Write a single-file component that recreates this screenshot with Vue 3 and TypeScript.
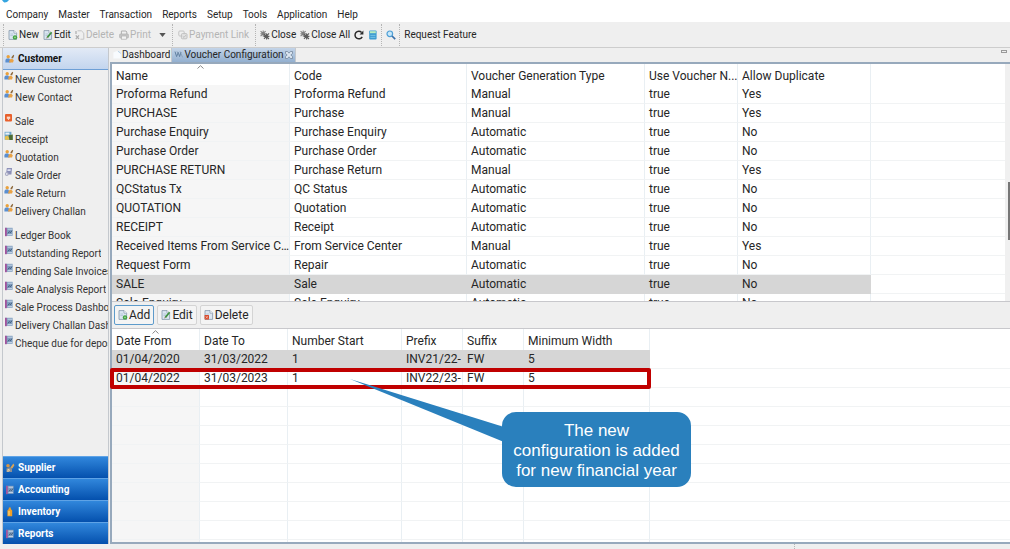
<script setup lang="ts">
import { ref } from 'vue'

interface Voucher {
  name: string
  code: string
  type: string
  numbered: string
  duplicate: string
}

interface NavItem {
  label: string
  icon: string
}

const menus: string[] = ['Company', 'Master', 'Transaction', 'Reports', 'Setup', 'Tools', 'Application', 'Help']

const make = (name: string, code: string, type: string, duplicate: string): Voucher => ({
  name, code, type, numbered: 'true', duplicate,
})

const vouchers: Voucher[] = [
  make('Proforma Refund', 'Proforma Refund', 'Manual', 'Yes'),
  make('PURCHASE', 'Purchase', 'Manual', 'Yes'),
  make('Purchase Enquiry', 'Purchase Enquiry', 'Automatic', 'No'),
  make('Purchase Order', 'Purchase Order', 'Automatic', 'No'),
  make('PURCHASE RETURN', 'Purchase Return', 'Manual', 'Yes'),
  make('QCStatus Tx', 'QC Status', 'Automatic', 'No'),
  make('QUOTATION', 'Quotation', 'Automatic', 'No'),
  make('RECEIPT', 'Receipt', 'Automatic', 'No'),
  make('Received Items From Service C…', 'From Service Center', 'Manual', 'Yes'),
  make('Request Form', 'Repair', 'Automatic', 'No'),
  make('SALE', 'Sale', 'Automatic', 'No'),
  make('Sale Enquiry', 'Sale Enquiry', 'Automatic', 'No'),
]
const selectedVoucher = ref('SALE')

const periods: string[][] = [
  ['01/04/2020', '31/03/2022', '1', 'INV21/22-', 'FW', '5'],
  ['01/04/2022', '31/03/2023', '1', 'INV22/23-', 'FW', '5'],
]
const selectedPeriod = ref(0)

const navGroups: NavItem[][] = [
  [
    { label: 'New Customer', icon: 'people' },
    { label: 'New Contact', icon: 'people' },
  ],
  [
    { label: 'Sale', icon: 'sale' },
    { label: 'Receipt', icon: 'receipt' },
    { label: 'Quotation', icon: 'people' },
    { label: 'Sale Order', icon: 'order' },
    { label: 'Sale Return', icon: 'people' },
    { label: 'Delivery Challan', icon: 'people' },
  ],
  [
    { label: 'Ledger Book', icon: 'book' },
    { label: 'Outstanding Report', icon: 'book' },
    { label: 'Pending Sale Invoices', icon: 'book' },
    { label: 'Sale Analysis Report', icon: 'book' },
    { label: 'Sale Process Dashboard', icon: 'book' },
    { label: 'Delivery Challan Dashboard', icon: 'book' },
    { label: 'Cheque due for deposit', icon: 'book' },
  ],
]

const sections: NavItem[] = [
  { label: 'Supplier', icon: 'supplier' },
  { label: 'Accounting', icon: 'book' },
  { label: 'Inventory', icon: 'bottle' },
  { label: 'Reports', icon: 'book' },
]
</script>

<template>
  <div class="app">
    <svg class="sprite" aria-hidden="true">
      <symbol id="people" viewBox="0 0 10 10">
        <circle cx="3.2" cy="2.8" r="1.7" fill="#eaa13c" />
        <path d="M.4 8.6V6.4Q.6 4.8 2 4.6H4.2L5.6 6.6V8.6Z" fill="#5b8fd0" />
        <path d="M4 8.6 4.8 5.6 7 4.6 8.8 6.2 8 8.6Z" fill="#e9a246" />
        <path d="M6.2 3.6 8.4.8 9.2 1.6 8 4.4Z" fill="#8f6a3c" />
      </symbol>
      <symbol id="sale" viewBox="0 0 10 10">
        <rect x="1" y="1" width="7" height="7.4" rx="1" fill="#e8602c" />
        <path d="M2.8 3.6H6.2V5.8H2.8Z" fill="#fbd9c8" />
        <path d="M3.4 5.8H5.6L4.5 7Z" fill="#fff" />
      </symbol>
      <symbol id="receipt" viewBox="0 0 10 10">
        <rect x=".6" y=".8" width="6.8" height="8" fill="#6fa5c9" />
        <rect x="1.4" y="1.6" width="4" height="2" fill="#e9f2f8" />
        <path d="M1 8.8V5.6L4 4.4 6 8.8Z" fill="#e5c04a" />
        <path d="M4.6 4.2 8.8 3.6V9H5.4Z" fill="#4c6b35" />
      </symbol>
      <symbol id="order" viewBox="0 0 10 10">
        <path d="M2.8 1H8L7.4 7.6H2Z" fill="#8c90b8" />
        <path d="M3.6 2.2H6.8L6.5 4H3.4Z" fill="#dfe2f2" />
        <circle cx="2.8" cy="7" r="1.9" fill="#a9abc4" />
        <circle cx="2.8" cy="7" r=".8" fill="#fff" />
      </symbol>
      <symbol id="book" viewBox="0 0 10 10">
        <rect x="1" y=".8" width="7.6" height="8" fill="#7f9dbf" />
        <rect x="1" y=".8" width="1.8" height="8.4" fill="#a2549c" />
        <path d="M3.6 2.2H8M3.6 7.6H8" stroke="#dbe5f0" stroke-width=".8" />
        <path d="M4 6.4 5.4 4.6 6.4 5.6 8 3.6" fill="none" stroke="#38516f" stroke-width=".9" />
      </symbol>
      <symbol id="supplier" viewBox="0 0 10 10">
        <circle cx="3" cy="2.8" r="1.8" fill="#d99443" />
        <path d="M1.4 9V5.4L5 4.2 7 5.6V9Z" fill="#8d8f93" />
        <path d="M5.4 4.6 8.4.6 9.4 2.2 7.4 5.4Z" fill="#d9a557" />
        <path d="M3 9V6.4L5 7.4" stroke="#f2d9a8" fill="none" />
      </symbol>
      <symbol id="bottle" viewBox="0 0 10 10">
        <path d="M3.8 .6H5.8V2L7.2 3.6V9.2H2.4V3.6L3.8 2Z" fill="#f2a127" />
        <path d="M4 4V8.4" stroke="#ffdc86" />
      </symbol>
      <symbol id="page" viewBox="0 0 10 10">
        <path d="M1 .6H6L8.6 3.2V9.4H1Z" fill="#dbe6f2" stroke="#8497aa" stroke-width=".8" />
        <path d="M6 .6V3.2H8.6" fill="#fff" stroke="#8497aa" stroke-width=".7" />
        <path d="M2.4 4H5M2.4 5.6H5" stroke="#a8bacd" stroke-width=".7" />
      </symbol>
      <symbol id="new" viewBox="0 0 10 10">
        <use href="#page" />
        <circle cx="7" cy="7.4" r="2.2" fill="#3fa23f" />
        <path d="M7 6.4V8.4M6 7.4H8" stroke="#a5dc9c" stroke-width=".7" />
      </symbol>
      <symbol id="edit" viewBox="0 0 10 10">
        <use href="#page" />
        <path d="M4.4 7.4 8.6 2.2" stroke="#3f9140" stroke-width="1.7" />
        <path d="M3.4 8.6 3.8 6.9 5 7.8Z" fill="#7a5a2b" />
      </symbol>
      <symbol id="remove" viewBox="0 0 10 10">
        <use href="#page" />
        <rect x=".6" y="5" width="4.4" height="4.6" rx=".6" fill="#d8492c" />
        <path d="M1.8 6.2 3.8 8.4M3.8 6.2 1.8 8.4" stroke="#f9cdbf" stroke-width=".7" />
      </symbol>
      <symbol id="remove-off" viewBox="0 0 10 10">
        <path d="M2.6 .8H6.4L8.8 3.2V9.2H5.4" fill="none" stroke="#c4c4c4" />
        <path d="M.8 5.4 4 9M4 5.4.8 9M1 1V4" stroke="#adadad" stroke-width="1.2" />
      </symbol>
      <symbol id="print-off" viewBox="0 0 10 10">
        <path d="M2.4 4V1H7L7.8 2V4" fill="none" stroke="#b0b0b0" />
        <rect x=".6" y="4" width="8.8" height="4" rx=".8" fill="#c6c6c6" stroke="#b0b0b0" stroke-width=".7" />
        <rect x="2.4" y="6" width="5.2" height="3.2" fill="#f2f2f2" stroke="#b0b0b0" stroke-width=".7" />
      </symbol>
      <symbol id="link-off" viewBox="0 0 10 10">
        <rect x=".8" y="1" width="5.4" height="5" rx="1" fill="none" stroke="#c4c4c4" />
        <rect x="3.4" y="3.6" width="5.6" height="5.2" rx="1" fill="#e2e2e2" stroke="#c0c0c0" />
        <path d="M4.8 6.4 6 7.4 7.8 5.2" fill="none" stroke="#b4b4b4" stroke-width=".8" />
      </symbol>
      <symbol id="close-tool" viewBox="0 0 10 10">
        <path d="M.6 1.2 6 6.6M5.6 1.2.6 6.2M.4 3.8H6.4M3.2.6V6.6" stroke="#808080" stroke-width="1.1" />
        <path d="M4 4 9 9M9 3.4 4 8.8M3.6 6.4H9.4M6.6 3.4V9.4" stroke="#5c5c5c" stroke-width="1.1" />
      </symbol>
      <symbol id="refresh" viewBox="0 0 10 10">
        <path d="M8.2 6.8A3.8 3.8 0 1 1 7.6 2.4" fill="none" stroke="#2b2b2b" stroke-width="1.5" />
        <path d="M9.4.6V4.4H5.6Z" fill="#2b2b2b" />
      </symbol>
      <symbol id="calc" viewBox="0 0 10 10">
        <rect x="1.2" y=".4" width="7.4" height="9.2" rx="1" fill="#3c9bd0" />
        <rect x="2" y="1.2" width="5.8" height="2" fill="#b9ecc0" />
        <path d="M2.4 5.4H7.4M2.4 7.4H7.4" stroke="#74c2e6" stroke-width="1" />
      </symbol>
      <symbol id="search" viewBox="0 0 10 10">
        <circle cx="3.8" cy="3.8" r="2.8" fill="#c9e8fa" stroke="#4d9fd6" stroke-width="1.2" />
        <path d="M6 6 9.2 9.2" stroke="#3a6fa8" stroke-width="1.7" />
      </symbol>
      <symbol id="dash" viewBox="0 0 10 10">
        <path d="M1.4 8.4V2.6L5 1 8.6 3V8.4Z" fill="#f8fbfe" />
        <path d="M6 1.2 8.8 3.4" stroke="#b5d3ea" />
      </symbol>
      <symbol id="voucher" viewBox="0 0 10 10">
        <path d="M1 1.6 2.6 6.6 4.2 2.4 5.6 6.6 7 2" fill="none" stroke="#5f7fa0" stroke-width="1" />
        <path d="M6 1.4 8.6 7.4M3 1.4 4.6 5" stroke="#7f99b3" stroke-width=".8" />
      </symbol>
      <symbol id="tab-x" viewBox="0 0 10 10">
        <path d="M1.5 1.5H3.5L5 3.2 6.5 1.5H8.5V3.5L6.8 5 8.5 6.5V8.5H6.5L5 6.8 3.5 8.5H1.5V6.5L3.2 5 1.5 3.5Z" fill="#dce6f1" stroke="#74879b" stroke-width=".8" />
      </symbol>
    </svg>

    <nav class="menubar" aria-label="Main menu">
      <svg class="logo" viewBox="0 0 9 3" aria-hidden="true"><path d="M1 0H8Q6 2.8 3.4 2.6Q2.4 2 1 0Z" fill="#35a5e0" /></svg>
      <button v-for="menu in menus" :key="menu" type="button" class="menu">{{ menu }}</button>
    </nav>

    <div class="toolbar" role="toolbar" aria-label="Actions">
      <div class="tools">
        <button type="button" class="tool"><svg class="icon"><use href="#new" /></svg>New</button>
        <button type="button" class="tool"><svg class="icon"><use href="#edit" /></svg>Edit</button>
        <button type="button" class="tool" disabled><svg class="icon"><use href="#remove-off" /></svg>Delete</button>
        <button type="button" class="tool wide" disabled><svg class="icon"><use href="#print-off" /></svg>Print</button>
        <button type="button" class="tool wide" aria-label="Print options"><svg class="chevron" viewBox="0 0 8 5"><path d="M0 0H8L4 5Z" fill="#555" /></svg></button>
      </div>
      <div class="tools">
        <button type="button" class="tool wide" disabled><svg class="icon"><use href="#link-off" /></svg>Payment Link</button>
      </div>
      <div class="tools">
        <button type="button" class="tool"><svg class="icon"><use href="#close-tool" /></svg>Close</button>
        <button type="button" class="tool"><svg class="icon"><use href="#close-tool" /></svg>Close All</button>
        <button type="button" class="tool" aria-label="Refresh"><svg class="icon"><use href="#refresh" /></svg></button>
        <button type="button" class="tool" aria-label="Calculator"><svg class="icon"><use href="#calc" /></svg></button>
      </div>
      <div class="tools">
        <button type="button" class="tool" aria-label="Search"><svg class="icon"><use href="#search" /></svg></button>
      </div>
      <div class="tools">
        <button type="button" class="tool">Request Feature</button>
      </div>
    </div>

    <div class="body">
      <aside class="sidebar">
        <button type="button" class="section current"><svg class="icon"><use href="#people" /></svg>Customer</button>
        <div class="links">
          <ul v-for="(group, g) in navGroups" :key="g" class="group">
            <li v-for="item in group" :key="item.label">
              <a href="#" class="link"><svg class="icon"><use :href="'#' + item.icon" /></svg><span class="label">{{ item.label }}</span></a>
            </li>
          </ul>
        </div>
        <button v-for="section in sections" :key="section.label" type="button" class="section">
          <svg class="icon"><use :href="'#' + section.icon" /></svg>{{ section.label }}
        </button>
      </aside>

      <main class="editor">
        <div class="tabs" role="tablist">
          <button type="button" role="tab" class="tab" aria-selected="false"><svg class="icon"><use href="#dash" /></svg>Dashboard</button>
          <button type="button" role="tab" class="tab active" aria-selected="true"><svg class="icon"><use href="#voucher" /></svg>Voucher Configuration<svg class="icon"><use href="#tab-x" /></svg></button>
          <span class="minimize"></span>
        </div>

        <div class="content">
          <section class="pane vouchers">
            <table class="grid">
              <colgroup>
                <col class="w178"><col class="w177"><col class="w178"><col class="w93"><col class="w133"><col>
              </colgroup>
              <thead>
                <tr>
                  <th class="sorted">Name<svg class="caret" viewBox="0 0 7 4"><path d="M.5 3.5 3.5.7 6.5 3.5" /></svg></th>
                  <th>Code</th>
                  <th>Voucher Generation Type</th>
                  <th>Use Voucher N...</th>
                  <th>Allow Duplicate</th>
                  <td></td>
                </tr>
              </thead>
              <tbody>
                <tr v-for="row in vouchers" :key="row.name" :class="{ selected: row.name === selectedVoucher }" @click="selectedVoucher = row.name">
                  <td>{{ row.name }}</td>
                  <td>{{ row.code }}</td>
                  <td>{{ row.type }}</td>
                  <td>{{ row.numbered }}</td>
                  <td>{{ row.duplicate }}</td>
                  <td></td>
                </tr>
              </tbody>
            </table>
            <div class="track"><div class="thumb"></div></div>
          </section>

          <div class="actions">
            <button type="button" class="action focused"><svg class="icon"><use href="#new" /></svg>Add</button>
            <button type="button" class="action"><svg class="icon"><use href="#edit" /></svg>Edit</button>
            <button type="button" class="action"><svg class="icon"><use href="#remove" /></svg>Delete</button>
          </div>

          <section class="periods">
            <div class="pane">
              <table class="grid">
                <colgroup>
                  <col class="w88"><col class="w88"><col class="w114"><col class="w61"><col class="w61"><col class="w126"><col>
                </colgroup>
                <thead>
                  <tr>
                    <th class="sorted">Date From<svg class="caret" viewBox="0 0 7 4"><path d="M.5 3.5 3.5.7 6.5 3.5" /></svg></th>
                    <th>Date To</th>
                    <th>Number Start</th>
                    <th>Prefix</th>
                    <th>Suffix</th>
                    <th>Minimum Width</th>
                    <td></td>
                  </tr>
                </thead>
                <tbody>
                  <tr v-for="(row, i) in periods" :key="i" :class="{ selected: i === selectedPeriod }" @click="selectedPeriod = i">
                    <td v-for="(cell, c) in row" :key="c">{{ cell }}</td>
                    <td></td>
                  </tr>
                  <tr v-for="n in 30" :key="'blank' + n">
                    <td v-for="c in 7" :key="c"></td>
                  </tr>
                </tbody>
              </table>
            </div>
            <div class="highlight"></div>
            <svg class="pointer" viewBox="0 0 154 64"><path d="M0 0 154 48V63Z" fill="#2a80bd" /></svg>
            <div class="callout">The new<br>configuration is added<br>for new financial year</div>
          </section>
        </div>
      </main>
    </div>

    <footer class="status"><span class="divider"></span></footer>
  </div>
</template>

<style>
html,
body {
  background: #efefef;
}
</style>

<style scoped>
.app {
  display: flex;
  flex-direction: column;
  height: 100vh;
  overflow: hidden;
  background: #efefef;
  color: #262626;
  font-family: Roboto, sans-serif;
  font-size: 12px;
}

.sprite {
  display: none;
}

button {
  margin: 0;
  padding: 0;
  border: 0;
  background: none;
  color: inherit;
  font: inherit;
  white-space: nowrap;
}

.icon {
  flex: none;
  width: 10px;
  height: 10px;
}

.menubar {
  position: relative;
  display: flex;
  flex: none;
  gap: 10px;
  height: 15px;
  padding: 7px 6px 0;
  background: #fff;
  font-size: 10px;
}

.logo {
  position: absolute;
  top: 0;
  left: 1px;
  width: 9px;
  height: 3px;
}

.menu {
  line-height: 15px;
}

.toolbar {
  display: flex;
  flex: none;
  align-items: center;
  height: 25px;
  padding-left: 3px;
  border-bottom: 1px solid #cdcdcd;
  font-size: 10px;
}

.tools {
  display: flex;
  align-items: center;
  gap: 4px;
  height: 22px;
  padding: 0 3px 0 4px;
  border-left: 1px dotted #b5b5b5;
}

.tool {
  display: flex;
  align-items: center;
  gap: 1px;
}

.tool.wide {
  padding: 0 3px 0 1px;
}

.tool:disabled {
  color: #b4b4b4;
}

.chevron {
  width: 7px;
  height: 4px;
}

.body {
  display: flex;
  flex: 1;
  min-height: 0;
}

.sidebar {
  display: flex;
  flex: none;
  flex-direction: column;
  width: 105px;
  margin-left: 2px;
  border: solid #c4c8cd;
  border-width: 0 1px;
}

.section {
  display: flex;
  flex: none;
  align-items: center;
  gap: 3px;
  height: 22px;
  padding-left: 2px;
  border-top: 1px solid #5fa3e6;
  background: linear-gradient(#3187dc, #0450ad);
  color: #fff;
  font-size: 10px;
  font-weight: 700;
}

.section.current {
  border-top: 0;
  border-bottom: 1px solid #6d9fd6;
  background: linear-gradient(#e2eaf6, #c3d5ee);
  color: #111;
}

.links {
  flex: 1;
  min-height: 0;
  overflow: hidden;
}

.group {
  margin: 0 0 6px;
  padding: 0;
  list-style: none;
}

.link {
  display: flex;
  gap: 1px;
  height: 18px;
  padding: 1px 0 0 1px;
  box-sizing: border-box;
  color: #333;
  font-size: 10px;
  line-height: 18px;
  text-decoration: none;
  white-space: nowrap;
}

.label {
  overflow: hidden;
}

.editor {
  display: flex;
  flex: 1;
  flex-direction: column;
  min-width: 0;
  margin-left: 1px;
}

.tabs {
  display: flex;
  flex: none;
  height: 14px;
  font-size: 10px;
}

.tab {
  display: flex;
  align-items: center;
  padding: 0 1px 0 2px;
  border-right: 1px solid #c4c8cd;
  line-height: 14px;
}

.tab.active {
  background: linear-gradient(#c3d4e8, #93b0d0);
}

.minimize {
  width: 4px;
  height: 1px;
  margin: 2px 3px 0 auto;
  border: 1px solid #999;
}

.content {
  display: flex;
  flex: 1;
  flex-direction: column;
  min-height: 0;
  border: solid #97a9bc;
  border-width: 2px 0 2px 2px;
}

.pane {
  overflow: hidden;
  background: #fff;
}

.vouchers {
  display: flex;
  flex: none;
  height: 237px;
}

.grid {
  flex: 1;
  width: 100%;
  min-width: 0;
  border-collapse: separate;
  border-spacing: 0;
  table-layout: fixed;
}

.w178 { width: 178px; }
.w177 { width: 177px; }
.w133 { width: 133px; }
.w126 { width: 126px; }
.w114 { width: 114px; }
.w93 { width: 93px; }
.w88 { width: 88px; }
.w61 { width: 61px; }

.grid th,
.grid td {
  box-sizing: border-box;
  height: 19px;
  padding: 0 0 0 4px;
  overflow: hidden;
  border-right: 1px solid #e9eff3;
  border-bottom: 1px solid #f1f3f4;
  font-weight: 400;
  line-height: 18px;
  text-align: left;
  white-space: nowrap;
}

.grid thead th,
.grid thead td {
  height: 21px;
  padding-top: 2px;
  border-bottom: 0;
}

.grid td:last-child {
  border-right: 0;
}

.grid tbody td:first-child {
  background: #f6f6f6;
}

.grid tbody .selected td:not(:last-child) {
  border-color: #d6d6d6;
  background: #d6d6d6;
}

.grid .sorted {
  position: relative;
}

.caret {
  position: absolute;
  top: 1px;
  left: 50%;
  width: 7px;
  height: 4px;
  margin-left: -4px;
  fill: none;
  stroke: #888;
}

.track {
  flex: none;
  width: 5px;
  background: #f0f0f0;
}

.thumb {
  height: 58px;
  margin: 118px 0 0 3px;
  background: #777;
}

.actions {
  display: flex;
  flex: none;
  align-items: center;
  gap: 3px;
  height: 26px;
  padding: 0 2px;
  border: solid #c8c8cc;
  border-width: 1px 0;
}

.action {
  display: flex;
  align-items: center;
  gap: 1px;
  height: 20px;
  padding: 0 3px;
  border: 1px solid #d4d4d4;
  border-radius: 2px;
  background: #f4f4f4;
}

.action.focused {
  border-color: #5d9bcb;
}

.periods {
  position: relative;
  flex: 1;
  min-height: 0;
}

.periods .pane {
  height: 100%;
}

.highlight {
  position: absolute;
  top: 39px;
  left: -2px;
  box-sizing: border-box;
  width: 541px;
  height: 21px;
  border: 4px solid #c00000;
  border-radius: 2px;
}

.pointer {
  position: absolute;
  top: 50px;
  left: 238px;
  width: 154px;
  height: 64px;
}

.callout {
  position: absolute;
  top: 83px;
  left: 390px;
  box-sizing: border-box;
  width: 189px;
  padding: 9px 0 6px;
  border-radius: 14px;
  background: #2a80bd;
  color: #fff;
  font-family: "Liberation Sans", Arial, sans-serif;
  font-size: 17px;
  line-height: 20px;
  text-align: center;
  white-space: nowrap;
}

.status {
  display: flex;
  flex: none;
  justify-content: flex-end;
  height: 5px;
}

.divider {
  width: 215px;
  border-left: 1px dotted #b5b5b5;
}
</style>
